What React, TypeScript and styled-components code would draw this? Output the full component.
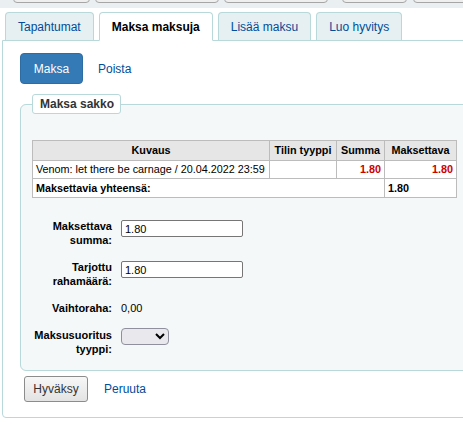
import React from "react";
import styled, { createGlobalStyle } from "styled-components";

const Global = createGlobalStyle`
  html, body { margin: 0; padding: 0; overflow: hidden; background: #fff; }
  body { font-family: "Liberation Sans", Arial, sans-serif; color: #000; }
`;

const Page = styled.div`
  width: 490px;
`;

const TopStrip = styled.div`
  height: 3px;
  padding-bottom: 5px;
  background: #eaf0f1;
  display: flex;
  align-items: flex-end;
  overflow: hidden;
`;

const StripButton = styled.div<{ $w: number; $ml: number }>`
  flex: none;
  width: ${(p) => p.$w}px;
  margin-left: ${(p) => p.$ml}px;
  height: 20px;
  box-sizing: border-box;
  border: 1px solid #a6a6a6;
  border-radius: 4px;
  background: #efefef;
`;

const TabRow = styled.div`
  display: flex;
  align-items: flex-end;
  gap: 5px;
  margin-top: 4px;
  padding-left: 5px;
`;

const Tab = styled.div<{ $active?: boolean }>`
  position: relative;
  z-index: 1;
  box-sizing: border-box;
  height: ${(p) => (p.$active ? 29 : 28)}px;
  margin-bottom: ${(p) => (p.$active ? -1 : 0)}px;
  padding: 0 12px;
  display: flex;
  align-items: center;
  border: 1px solid #b9d8d9;
  border-bottom: ${(p) => (p.$active ? "1px solid #fff" : "none")};
  border-radius: 4px 4px 0 0;
  background: ${(p) => (p.$active ? "#fff" : "#e6eff1")};
  color: ${(p) => (p.$active ? "#000" : "#004d99")};
  font-weight: ${(p) => (p.$active ? "bold" : "normal")};
  font-size: 12px;
`;

const Panel = styled.div`
  margin-left: 2px;
  border: 1px solid #b9d8d9;
  border-radius: 0 0 0 4px;
  padding: 12px 0 15px 17px;
`;

const ActionRow = styled.div`
  display: flex;
  align-items: center;
  gap: 15px;
`;

const PrimaryButton = styled.div`
  box-sizing: border-box;
  height: 31px;
  width: 63px;
  display: flex;
  align-items: center;
  justify-content: center;
  background: #337ab7;
  border: 1px solid #2e6da4;
  border-radius: 4px;
  color: #fff;
  font-size: 12px;
`;

const Link = styled.a`
  color: #004d99;
  font-size: 12px;
  text-decoration: none;
`;

const Fieldset = styled.fieldset`
  margin: 10px 0 0 0;
  padding: 26px 11px 14px 11px;
  border: 1px solid #b9d8d9;
  border-radius: 6px;
  background: #f4f8f9;
  min-width: 0;
`;

const Legend = styled.legend`
  box-sizing: border-box;
  height: 20px;
  padding: 2px 6px 2px 7px;
  border: 1px solid #b9d8d9;
  border-radius: 3px;
  background: #fff;
  color: #333;
  font-weight: bold;
  font-size: 12px;
  line-height: 14px;
`;

const Table = styled.table`
  width: 424px;
  table-layout: fixed;
  border-collapse: collapse;
  font-size: 10.8px;
  line-height: 13px;
  background: #fff;
`;

const Th = styled.th`
  background: #e6e6e6;
  border: 1px solid #bcbcbc;
  padding: 3px 3px;
  font-weight: bold;
  text-align: center;
  color: #000;
  white-space: nowrap;
`;

const Td = styled.td<{ $align?: "left" | "right"; $red?: boolean; $bold?: boolean; $pad?: string }>`
  border: 1px solid #bcbcbc;
  padding: ${(p) => p.$pad ?? "2px 3px"};
  text-align: ${(p) => p.$align ?? "left"};
  color: ${(p) => (p.$red ? "#cc0000" : "#000")};
  font-weight: ${(p) => (p.$bold || p.$red ? "bold" : "normal")};
  white-space: nowrap;
  overflow: hidden;
`;

const Form = styled.div`
  margin-top: 21px;
  display: flex;
  flex-direction: column;
  gap: 13px;
`;

const FormRow = styled.div`
  display: grid;
  grid-template-columns: 80px auto;
  column-gap: 9px;
  align-items: start;
`;

const Label = styled.label`
  text-align: right;
  font-weight: bold;
  font-size: 11px;
  line-height: 14px;
  color: #000;
`;

const Value = styled.span`
  font-size: 11px;
  line-height: 14px;
`;

const TextInput = styled.input`
  box-sizing: border-box;
  width: 122px;
  height: 17px;
  margin: 1px 0 0 0;
  padding: 0 3px;
  border: 1px solid #767676;
  border-radius: 2px;
  font-family: "Liberation Sans", Arial, sans-serif;
  font-size: 11px;
  background: #fff;
`;

const Select = styled.select`
  box-sizing: border-box;
  width: 48px;
  height: 17px;
  margin: 0;
  border: 1px solid #8f8f9d;
  border-radius: 4px;
  background: #e9e9ed;
  font-size: 11px;
`;

const Footer = styled.div`
  display: flex;
  align-items: center;
  gap: 16px;
  margin: 5px 0 0 4px;
`;

const SecondaryButton = styled.div`
  box-sizing: border-box;
  width: 64px;
  height: 26px;
  display: flex;
  align-items: center;
  justify-content: center;
  border: 1px solid #8c8c8c;
  border-radius: 3px;
  background: linear-gradient(#f7f7f7, #e3e3e3);
  color: #333;
  font-size: 12px;
`;

const stripButtons = [
  { w: 77, ml: 13 },
  { w: 124, ml: 5 },
  { w: 104, ml: 5 },
  { w: 65, ml: 14 },
  { w: 70, ml: 6 },
];

export default function App() {
  return (
    <Page>
      <Global />
      <TopStrip>
        {stripButtons.map((b, i) => (
          <StripButton key={i} $w={b.w} $ml={b.ml} />
        ))}
      </TopStrip>
      <TabRow>
        <Tab>Tapahtumat</Tab>
        <Tab $active>Maksa maksuja</Tab>
        <Tab>Lisää maksu</Tab>
        <Tab>Luo hyvitys</Tab>
      </TabRow>
      <Panel>
        <ActionRow>
          <PrimaryButton>Maksa</PrimaryButton>
          <Link>Poista</Link>
        </ActionRow>
        <Fieldset>
          <Legend>Maksa sakko</Legend>
          <Table>
            <colgroup>
              <col style={{ width: 237 }} />
              <col style={{ width: 67 }} />
              <col style={{ width: 48 }} />
              <col style={{ width: 72 }} />
            </colgroup>
            <thead>
              <tr>
                <Th>Kuvaus</Th>
                <Th>Tilin tyyppi</Th>
                <Th>Summa</Th>
                <Th>Maksettava</Th>
              </tr>
            </thead>
            <tbody>
              <tr>
                <Td>Venom: let there be carnage / 20.04.2022 23:59</Td>
                <Td></Td>
                <Td $align="right" $red>1.80</Td>
                <Td $align="right" $red>1.80</Td>
              </tr>
              <tr>
                <Td colSpan={3} $bold $pad="3px 3px 2px">Maksettavia yhteensä:</Td>
                <Td $bold $pad="3px 3px 2px">1.80</Td>
              </tr>
            </tbody>
          </Table>
          <Form>
            <FormRow>
              <Label>Maksettava<br />summa:</Label>
              <TextInput defaultValue="1.80" />
            </FormRow>
            <FormRow>
              <Label>Tarjottu<br />rahamäärä:</Label>
              <TextInput defaultValue="1.80" />
            </FormRow>
            <FormRow>
              <Label>Vaihtoraha:</Label>
              <Value>0,00</Value>
            </FormRow>
            <FormRow>
              <Label>Maksusuoritus<br />tyyppi:</Label>
              <Select defaultValue="">
                <option value=""></option>
              </Select>
            </FormRow>
          </Form>
        </Fieldset>
        <Footer>
          <SecondaryButton>Hyväksy</SecondaryButton>
          <Link>Peruuta</Link>
        </Footer>
      </Panel>
    </Page>
  );
}
